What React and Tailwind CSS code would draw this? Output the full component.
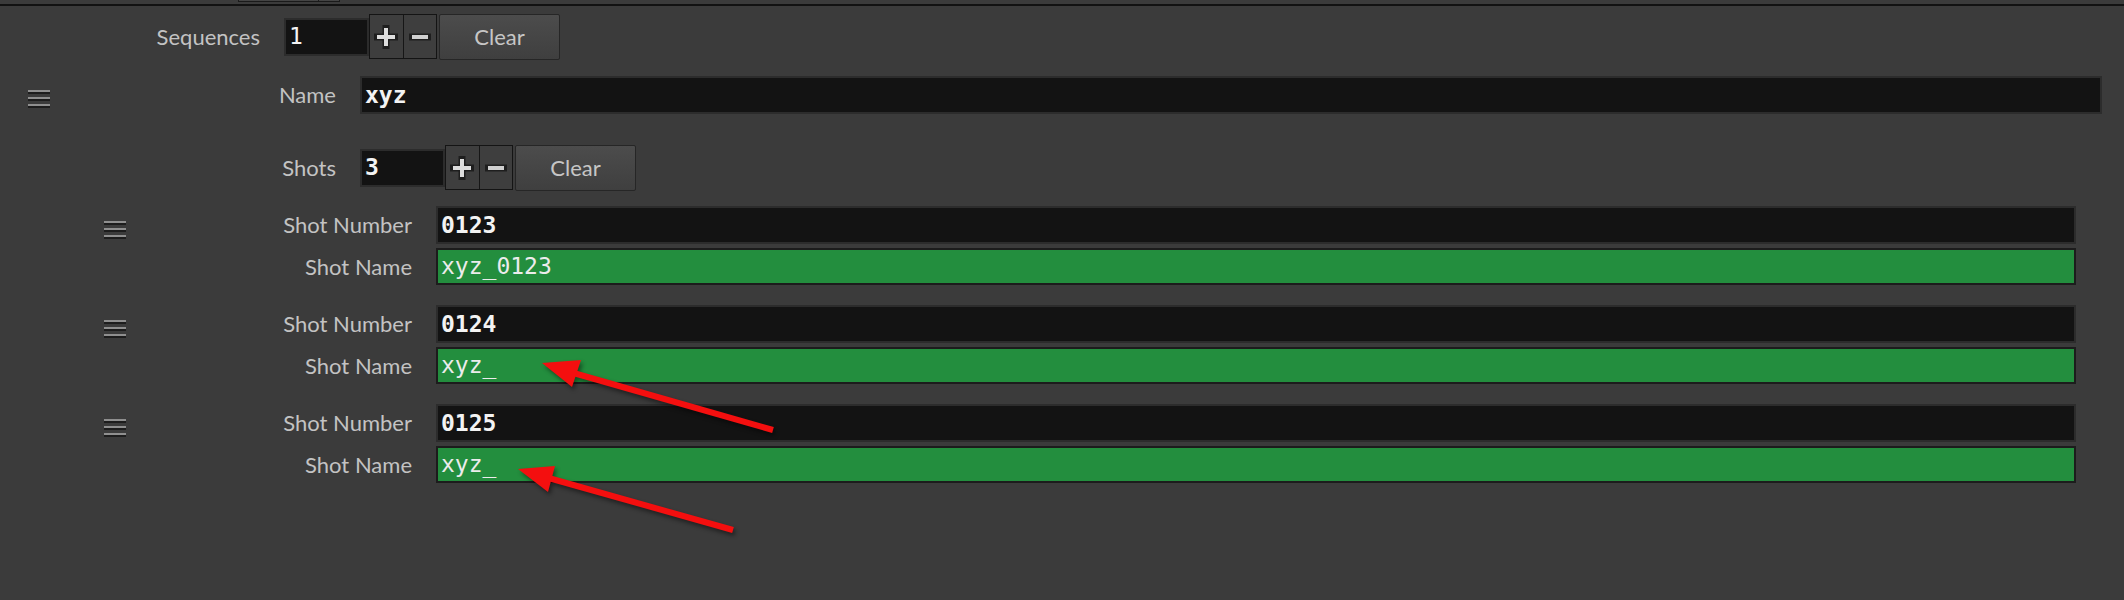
import React from 'react';

const mono = "font-['DejaVu_Sans_Mono','Liberation_Mono',monospace]";

function Grip() {
  return (
    <div className="flex w-[22px] flex-col gap-[3px]">
      {[0, 1, 2].map((i) => (
        <div key={i}>
          <div className="h-[2px] bg-[#8f8f8f]" />
          <div className="h-[2px] bg-[#1d1d1d]" />
        </div>
      ))}
    </div>
  );
}

function PlusIcon() {
  return (
    <svg width="24" height="24" viewBox="0 0 24 24">
      <path d="M12 2v20M2 12h20" stroke="#1e1e1e" strokeWidth="7" strokeLinecap="square" />
      <path d="M12 3v18M3 12h18" stroke="#dedede" strokeWidth="4" strokeLinecap="butt" />
    </svg>
  );
}

function MinusIcon() {
  return (
    <svg width="22" height="24" viewBox="0 0 22 24">
      <path d="M2 12h18" stroke="#1e1e1e" strokeWidth="7" strokeLinecap="square" />
      <path d="M3 12h16" stroke="#cfcfcf" strokeWidth="4" />
    </svg>
  );
}

function Label({ children }) {
  return (
    <div className="w-[260px] shrink-0 pr-0 text-right text-[22px] leading-none text-[#c3c3c3]">
      {children}
    </div>
  );
}

function Field({ value, bold = true, green = false, className = '' }) {
  return (
    <div
      className={`flex items-center border-2 pl-[3px] text-[23px] leading-none ${mono} ${
        green
          ? 'h-[37px] border-[#1c1c1c] bg-[#238e3e] font-normal text-[#ececec]'
          : 'h-[38px] border-[#2c2c2c] bg-[#131313] text-[#f3f3f3]'
      } ${bold && !green ? 'font-bold' : 'font-normal'} ${className}`}
    >
      {value}
    </div>
  );
}

function CountRow({ label, value, bold }) {
  return (
    <div className="flex h-[47px] items-center">
      <Label>{label}</Label>
      <Field value={value} bold={bold} className="ml-[24px] w-[85px]" />
      <div className="flex h-[45px] w-[68px] border border-[#141414] bg-[#3e3e3e]">
        <button className="flex flex-1 items-center justify-center border-r border-[#161616]">
          <PlusIcon />
        </button>
        <button className="flex flex-1 items-center justify-center">
          <MinusIcon />
        </button>
      </div>
      <button className="ml-[2px] h-[46px] w-[121px] rounded-[2px] border border-[#262626] bg-gradient-to-b from-[#4c4c4c] to-[#3f3f3f] text-[22px] text-[#c6c6c6]">
        Clear
      </button>
    </div>
  );
}

const shots = [
  { number: '0123', name: 'xyz_0123' },
  { number: '0124', name: 'xyz_' },
  { number: '0125', name: 'xyz_' },
];

export default function App() {
  return (
    <div className="relative h-[600px] w-[2124px] overflow-hidden bg-[#3b3b3b] font-['Lato','Noto_Sans',sans-serif]">
      {/* cut-off strip at the top */}
      <div className="h-[4px]">
        <div className="ml-[238px] flex h-[2px] w-[102px] border-x border-b border-[#1a1a1a] bg-[#444]">
          <div className="w-[80px] border-r border-[#1a1a1a]" />
        </div>
      </div>
      <div className="h-[2px] bg-[#121212]" />

      <div className="pt-[7px]">
        <CountRow label="Sequences" value="1" bold={false} />

        <div className="mt-[16px] flex pr-[22px]">
          <div className="w-[76px] shrink-0 pl-[28px] pt-[14px]">
            <Grip />
          </div>
          <div className="flex-1">
            <div className="flex items-center">
              <Label>Name</Label>
              <Field value="xyz" className="ml-[24px] h-[37px] flex-1" />
            </div>

            <div className="mt-[30px]">
              <CountRow label="Shots" value="3" bold />
            </div>

            <div className="mt-[15px] flex flex-col gap-[20px] pr-[26px]">
              {shots.map((s) => (
                <div key={s.number} className="flex">
                  <div className="w-[76px] shrink-0 pl-[28px] pt-[15px]">
                    <Grip />
                  </div>
                  <div className="flex flex-1 flex-col gap-[4px]">
                    <div className="flex items-center">
                      <Label>Shot Number</Label>
                      <Field value={s.number} className="ml-[24px] flex-1" />
                    </div>
                    <div className="flex items-center">
                      <Label>Shot Name</Label>
                      <Field value={s.name} green className="ml-[24px] flex-1" />
                    </div>
                  </div>
                </div>
              ))}
            </div>
          </div>
        </div>
      </div>

      {/* annotation arrows */}
      <svg
        className="pointer-events-none absolute left-0 top-0 drop-shadow-[2px_3px_2px_rgba(0,0,0,0.45)]"
        width="2124"
        height="600"
        viewBox="0 0 2124 600"
      >
        <line x1="773" y1="430" x2="570" y2="372" stroke="#f40f0f" strokeWidth="6" />
        <polygon points="542,363 581,360 572,387" fill="#f40f0f" />
        <line x1="733" y1="530" x2="545" y2="477" stroke="#f40f0f" strokeWidth="6" />
        <polygon points="518,469 555,466 548,492" fill="#f40f0f" />
      </svg>
    </div>
  );
}
